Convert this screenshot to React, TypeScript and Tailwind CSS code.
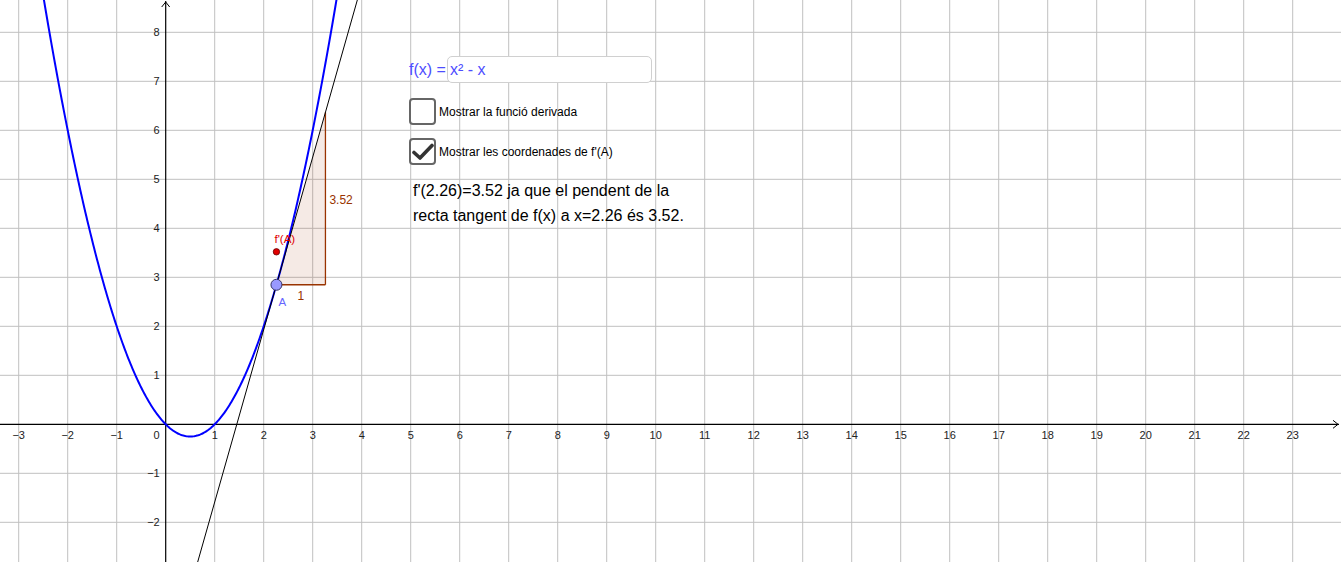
import React from 'react'

const W = 1341
const H = 562
const OX = 165.7
const OY = 424.3
const U = 49

const px = (x: number) => OX + x * U
const py = (y: number) => OY - y * U

const AX = 2.26
const f = (x: number) => x * x - x
const AY = f(AX)
const SLOPE = 2 * AX - 1

function parabolaPoints(): string {
  const pts: string[] = []
  for (let x = -3.2; x <= 4.2; x += 0.02) {
    pts.push(`${px(x).toFixed(2)},${py(f(x)).toFixed(2)}`)
  }
  return pts.join(' ')
}

const minus = (n: number) => (n < 0 ? `\u2212${-n}` : `${n}`)

function Graph() {
  const xs: number[] = []
  for (let i = -3; i <= 24; i++) xs.push(i)
  const ys: number[] = []
  for (let i = -2; i <= 8; i++) ys.push(i)

  const tx0 = -3
  const tx1 = 5
  const line = (x: number) => AY + SLOPE * (x - AX)

  return (
    <svg width={W} height={H} className="absolute inset-0" style={{ fontFamily: '"Liberation Sans", Arial, sans-serif' }}>
      {/* grid */}
      {xs.map((i) =>
        i === 0 ? null : (
          <line key={`gx${i}`} x1={px(i)} y1={0} x2={px(i)} y2={H} stroke="#c0c0c0" strokeWidth={1} />
        ),
      )}
      {ys.map((i) =>
        i === 0 ? null : (
          <line key={`gy${i}`} x1={0} y1={py(i)} x2={W} y2={py(i)} stroke="#c0c0c0" strokeWidth={1} />
        ),
      )}
      {/* axes */}
      <line x1={0} y1={OY} x2={W - 2} y2={OY} stroke="#000" strokeWidth={1.2} />
      <line x1={OX} y1={H} x2={OX} y2={1} stroke="#000" strokeWidth={1.2} />
      <polyline points={`${W - 8},${OY - 4} ${W - 3},${OY} ${W - 8},${OY + 4}`} fill="none" stroke="#000" strokeWidth={1} />
      <polyline points={`${OX - 4},${7} ${OX},${2} ${OX + 4},${7}`} fill="none" stroke="#000" strokeWidth={1} />
      {/* axis labels */}
      {xs.map((i) =>
        i === 0 || i > 23 ? null : (
          <text key={`lx${i}`} x={px(i)} y={OY + 15} fontSize={11} fill="#222" textAnchor="middle">
            {minus(i)}
          </text>
        ),
      )}
      <text x={OX - 6} y={OY + 15} fontSize={11} fill="#222" textAnchor="end">
        0
      </text>
      {ys.map((i) =>
        i === 0 ? null : (
          <text key={`ly${i}`} x={OX - 6} y={py(i) + 4} fontSize={11} fill="#222" textAnchor="end">
            {minus(i)}
          </text>
        ),
      )}
      {/* slope triangle */}
      <polygon
        points={`${px(AX)},${py(AY)} ${px(AX + 1)},${py(AY)} ${px(AX + 1)},${py(AY + SLOPE)}`}
        fill="#993300"
        fillOpacity={0.1}
        stroke="none"
      />
      <line x1={px(AX)} y1={py(AY)} x2={px(AX + 1)} y2={py(AY)} stroke="#993300" strokeWidth={1.3} />
      <line x1={px(AX + 1)} y1={py(AY)} x2={px(AX + 1)} y2={py(AY + SLOPE)} stroke="#993300" strokeWidth={1.3} />
      <text x={px(AX + 0.5)} y={py(AY) + 15} fontSize={12} fill="#993300" textAnchor="middle">
        1
      </text>
      <text x={px(AX + 1) + 4} y={204} fontSize={12} fill="#993300">
        3.52
      </text>
      {/* parabola */}
      <polyline points={parabolaPoints()} fill="none" stroke="#0000ff" strokeWidth={2} />
      {/* tangent */}
      <line x1={px(tx0)} y1={py(line(tx0))} x2={px(tx1)} y2={py(line(tx1))} stroke="#000" strokeWidth={1} />
      {/* f'(A) */}
      <circle cx={px(AX)} cy={py(SLOPE)} r={3.2} fill="#e00000" stroke="#600" strokeWidth={0.8} />
      <text x={px(AX) - 2} y={py(SLOPE) - 9} fontSize={11.5} fill="#e00000">
        f'(A)
      </text>
      {/* A */}
      <circle cx={px(AX)} cy={py(AY)} r={5.5} fill="#9999ff" stroke="#333366" strokeWidth={1} />
      <text x={px(AX) + 2} y={py(AY) + 21} fontSize={11.5} fill="#6666ff">
        A
      </text>
    </svg>
  )
}

function Checkbox({ checked }: { checked: boolean }) {
  return (
    <div className="flex h-[27px] w-[27px] items-center justify-center rounded-[4px] border-2 border-[#666] bg-white">
      {checked && (
        <svg width="22" height="18" viewBox="0 0 22 18">
          <path d="M2 9.5 L8 15 L20 2.5" fill="none" stroke="#333" strokeWidth="3.6" strokeLinecap="round" strokeLinejoin="round" />
        </svg>
      )}
    </div>
  )
}

export default function App() {
  return (
    <div
      className="relative h-[562px] w-[1341px] overflow-hidden bg-white"
      style={{ fontFamily: '"Liberation Sans", Arial, sans-serif' }}
    >
      <Graph />

      <div className="absolute left-[409px] top-[56px] flex items-center text-[16px] text-[#4d4dff]">
        <span className="mr-[1px]">f(x) =</span>
        <div className="flex h-[27px] w-[205px] items-center rounded-[5px] border border-[#d0d0d0] bg-white px-[2px]">
          x² - x
        </div>
      </div>

      <div className="absolute left-[409px] top-[98px] flex items-center gap-[3px]">
        <Checkbox checked={false} />
        <span className="text-[12px] text-black">Mostrar la funció derivada</span>
      </div>

      <div className="absolute left-[409px] top-[138px] flex items-center gap-[3px]">
        <Checkbox checked />
        <span className="text-[12px] text-black">Mostrar les coordenades de f'(A)</span>
      </div>

      <div className="absolute left-[413px] top-[178px] text-[16px] leading-[25px] text-black">
        <div>f'(2.26)=3.52 ja que el pendent de la</div>
        <div>recta tangent de f(x) a x=2.26 és 3.52.</div>
      </div>
    </div>
  )
}
